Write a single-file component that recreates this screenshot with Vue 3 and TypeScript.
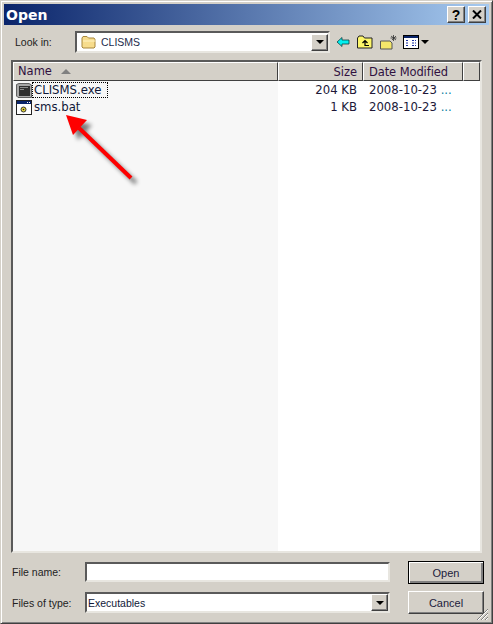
<script setup lang="ts">
interface FileRow {
  name: string
  size: string
  modified: string
  kind: 'exe' | 'bat'
  focused: boolean
}

const files: FileRow[] = [
  { name: 'CLISMS.exe', size: '204 KB', modified: '2008-10-23', kind: 'exe', focused: true },
  { name: 'sms.bat', size: '1 KB', modified: '2008-10-23', kind: 'bat', focused: false },
]
</script>

<template>
  <div class="window">
    <div class="titlebar">
      <span class="title">Open</span>
      <div class="caption-btns">
        <button class="caption-btn">?</button>
        <button class="caption-btn">
          <svg width="10" height="9" viewBox="0 0 10 9"><path d="M1 0.5 L9 8.5 M9 0.5 L1 8.5" stroke="#000" stroke-width="2" fill="none" /></svg>
        </button>
      </div>
    </div>

    <div class="toolbar">
      <span class="look-label">Look in:</span>
      <div class="combo look-combo">
        <svg class="folder" width="16" height="14" viewBox="0 0 16 14">
          <path d="M1 3 L2 1.5 H6 L7.5 3 H13 L14 4.5 V12 L13 13 H2 L1 12 Z" fill="#f7dc8c" stroke="#a8873c" />
          <path d="M2 6 H14.5" stroke="#fff3c4" fill="none" />
        </svg>
        <span class="combo-text">CLISMS</span>
        <span class="drop"><i class="caret"></i></span>
      </div>
      <div class="tools">
        <svg width="14" height="12" viewBox="0 0 14 12">
          <path d="M1 6 L6 1.5 V4 H13 V8 H6 V10.5 Z" fill="#00f0f0" stroke="#104040" stroke-width="0.8" />
        </svg>
        <svg width="16" height="14" viewBox="0 0 16 14">
          <path d="M0.5 3 L2 1 H6 L7.5 3 H15 V13 H0.5 Z" fill="#fdf66a" stroke="#222" />
          <path d="M8 11 V6 M5.5 8 L8 5.5 L10.5 8 M8 10.5 H12" stroke="#000" stroke-width="1.2" fill="none" />
        </svg>
        <svg width="17" height="15" viewBox="0 0 17 15">
          <path d="M0.5 6 H10 L12 8 V14 H0.5 Z" fill="#f4e66a" stroke="#555" />
          <path d="M12 5 L16 1 M11 1 L16 5 M13.5 0 V6 M10.5 3 H16.5" stroke="#333" stroke-width="0.8" fill="none" />
        </svg>
        <span class="view-tool">
          <svg width="16" height="14" viewBox="0 0 16 14">
            <rect x="0.5" y="0.5" width="15" height="13" fill="#fff" stroke="#000" />
            <rect x="1" y="1" width="14" height="2" fill="#0a246a" />
            <path d="M3 5.5 H6 M9 5.5 H13 M3 8 H6 M9 8 H13 M3 10.5 H6 M9 10.5 H13" stroke="#1a2fa0" stroke-dasharray="2 1" fill="none" />
          </svg>
          <i class="caret small"></i>
        </span>
      </div>
    </div>

    <div class="list">
      <div class="list-head">
        <div class="th th-name">Name <i class="sort"></i></div>
        <div class="th th-size">Size</div>
        <div class="th th-date">Date Modified</div>
        <div class="th th-rest"></div>
      </div>
      <div class="list-body">
        <div v-for="file in files" :key="file.name" class="row">
          <div class="cell-name">
            <svg v-if="file.kind === 'exe'" width="16" height="15" viewBox="0 0 16 15">
              <path d="M0.5 1.5 L3 0.5 H13 L15.5 2 V14.5 H2 L0.5 13 Z" fill="#a8a8a8" stroke="#606060" />
              <path d="M3 3 H14 V13 H3 Z" fill="#303030" />
              <path d="M4 4.5 H12 M4 6.5 H8" stroke="#8c8c8c" />
            </svg>
            <svg v-else width="16" height="15" viewBox="0 0 16 15">
              <rect x="0.5" y="0.5" width="15" height="14" fill="#fff" stroke="#222" />
              <rect x="1" y="1" width="14" height="3" fill="#0a246a" />
              <path d="M11 2.5 H14" stroke="#fff" stroke-dasharray="1 1" />
              <circle cx="7.5" cy="9.5" r="2.5" fill="#e8d838" stroke="#333" />
              <circle cx="7.5" cy="9.5" r="0.8" fill="#222" />
            </svg>
            <span class="fname" :class="{ focused: file.focused }">{{ file.name }}</span>
          </div>
          <div class="cell-size">{{ file.size }}</div>
          <div class="cell-date">{{ file.modified }} <span class="dots">...</span></div>
        </div>
      </div>

      <svg class="arrow" width="90" height="90" viewBox="0 0 90 90">
        <defs>
          <filter id="arrow-shadow" x="-20%" y="-20%" width="150%" height="150%">
            <feGaussianBlur stdDeviation="2" />
          </filter>
        </defs>
        <g transform="translate(5 5)" opacity="0.5" filter="url(#arrow-shadow)">
          <path d="M65 66 L13 16" stroke="#000" stroke-width="4" fill="none" />
          <path d="M0 3 L21 8 L7 23 Z" fill="#000" />
        </g>
        <path d="M65 66 L13 16" stroke="#fe0000" stroke-width="4" fill="none" />
        <path d="M0 3 L21 8 L7 23 Z" fill="#fe0000" />
      </svg>
    </div>

    <div class="bottom">
      <div class="fields">
        <div class="field">
          <label class="field-label">File name:</label>
          <input class="input" type="text" />
        </div>
        <div class="field">
          <label class="field-label">Files of type:</label>
          <div class="combo type-combo">
            <span class="combo-text">Executables</span>
            <span class="drop"><i class="caret"></i></span>
          </div>
        </div>
      </div>
      <div class="actions">
        <button class="btn default">Open</button>
        <button class="btn">Cancel</button>
      </div>
    </div>

    <svg class="grip" width="14" height="14" viewBox="0 0 14 14">
      <path d="M13 2 L2 13 M13 6 L6 13 M13 10 L10 13" stroke="#808080" fill="none" />
      <path d="M13 3 L3 13 M13 7 L7 13 M13 11 L11 13" stroke="#fff" fill="none" />
    </svg>
  </div>
</template>

<style>
html, body {
  margin: 0;
  background: #d4d0c8;
}
</style>

<style scoped>
.window {
  position: relative;
  box-sizing: border-box;
  width: 493px;
  height: 624px;
  padding: 4px;
  background: #d4d0c8;
  border: 1px solid;
  border-color: #d4d0c8 #404040 #404040 #d4d0c8;
  box-shadow: inset 1px 1px 0 #fff, inset -1px -1px 0 #808080;
  font-family: "DejaVu Sans", sans-serif;
  font-size: 11.5px;
  color: #000;
  display: flex;
  flex-direction: column;
}

.titlebar {
  height: 21px;
  margin: -1px -1px 0 -1px;
  padding: 0 3px 0 2px;
  background: linear-gradient(90deg, #0a246a, #a6caf0);
  display: flex;
  align-items: center;
  justify-content: space-between;
}

.title {
  color: #fff;
  font-weight: bold;
  font-size: 14px;
  font-family: "DejaVu Sans", sans-serif;
}

.caption-btns {
  display: flex;
  gap: 3px;
}

.caption-btn {
  width: 18px;
  height: 17px;
  padding: 0;
  background: #d4d0c8;
  border: 1px solid;
  border-color: #fff #404040 #404040 #fff;
  box-shadow: inset -1px -1px 0 #808080;
  font: bold 14px "Liberation Sans", sans-serif;
  display: flex;
  align-items: center;
  justify-content: center;
}

.toolbar {
  display: flex;
  align-items: center;
  height: 22px;
  margin-top: 6px;
  padding-left: 10px;
}

.look-label {
  width: 60px;
  color: #222;
  font-family: "Liberation Sans", sans-serif;
  font-size: 10.5px;
}

.combo {
  box-sizing: border-box;
  display: flex;
  align-items: center;
  background: #fff;
  border: 2px solid;
  border-color: #5a5a5a #e8e6e0 #e8e6e0 #5a5a5a;
  position: relative;
}

.look-combo {
  width: 255px;
  height: 22px;
  padding-left: 4px;
}

.folder {
  margin-right: 4px;
}

.combo-text {
  flex: 1;
  color: #1c2c4c;
  font-family: "Liberation Sans", sans-serif;
  font-size: 10.5px;
}

.drop {
  box-sizing: border-box;
  width: 17px;
  height: 17px;
  background: #d4d0c8;
  border: 1px solid;
  border-color: #fff #404040 #404040 #fff;
  box-shadow: inset -1px -1px 0 #808080;
  display: flex;
  align-items: center;
  justify-content: center;
  margin-right: 0;
}

.caret {
  width: 0;
  height: 0;
  border-left: 4px solid transparent;
  border-right: 4px solid transparent;
  border-top: 4px solid #000;
  display: block;
}

.caret.small {
  margin-left: 2px;
}

.tools {
  display: flex;
  align-items: center;
  gap: 7px;
  margin-left: 6px;
}

.view-tool {
  display: flex;
  align-items: center;
  margin-left: -1px;
}

.list {
  position: relative;
  box-sizing: border-box;
  height: 493px;
  margin: 7px 6px 0 6px;
  border: 2px solid;
  border-color: #5a5a5a #e8e6e0 #e8e6e0 #5a5a5a;
  display: flex;
  flex-direction: column;
  background: #fff;
}

.list-head {
  display: flex;
  height: 19px;
  flex: none;
}

.th {
  box-sizing: border-box;
  height: 19px;
  line-height: 19px;
  background: #d4d0c8;
  border: 1px solid;
  border-color: #fff #404040 #404040 #fff;
  color: #301040;
  white-space: nowrap;
}

.th-name {
  width: 265px;
  padding-left: 4px;
  display: flex;
  align-items: center;
  gap: 9px;
}

.sort {
  width: 0;
  height: 0;
  border-left: 5px solid transparent;
  border-right: 5px solid transparent;
  border-bottom: 5px solid #808080;
}

.th-size {
  width: 85px;
  text-align: right;
  padding-right: 5px;
}

.th-date {
  width: 100px;
  padding-left: 5px;
  letter-spacing: -0.1px;
}

.th-rest {
  flex: 1;
}

.list-body {
  flex: 1;
  background: linear-gradient(90deg, #f7f7f7 265px, #fff 265px);
}

.row {
  display: flex;
  align-items: center;
  height: 17px;
  font-size: 11.7px;
}

.cell-name {
  width: 265px;
  padding-left: 3px;
  box-sizing: border-box;
  display: flex;
  align-items: center;
}

.cell-name svg {
  margin-top: 2px;
}

.fname {
  padding: 0 5px 0 1px;
  border: 1px dotted transparent;
  color: #101838;
  line-height: 14px;
}

.fname.focused {
  border-color: #000;
}

.cell-size {
  width: 79px;
  text-align: right;
  color: #201838;
}

.cell-date {
  margin-left: 12px;
  color: #201838;
  white-space: nowrap;
}

.dots {
  color: #0a80a0;
}

.arrow {
  position: absolute;
  left: 53px;
  top: 50px;
}

.bottom {
  display: flex;
  margin: 8px 0 0 7px;
  height: 54px;
}

.fields {
  display: flex;
  flex-direction: column;
  gap: 10px;
}

.field {
  display: flex;
  align-items: center;
  height: 21px;
}

.field-label {
  width: 73px;
  font-family: "Liberation Sans", sans-serif;
  font-size: 10.5px;
  color: #222;
}

.input {
  box-sizing: border-box;
  width: 305px;
  height: 20px;
  margin: 0;
  background: #fff;
  border: 2px solid;
  border-color: #5a5a5a #e8e6e0 #e8e6e0 #5a5a5a;
  outline: none;
}

.type-combo {
  width: 305px;
  height: 21px;
  padding-left: 1px;
}

.type-combo .combo-text {
  color: #101838;
}

.actions {
  display: flex;
  flex-direction: column;
  gap: 7px;
  margin-left: 18px;
}

.btn {
  box-sizing: border-box;
  width: 76px;
  height: 23px;
  padding: 0;
  background: #d4d0c8;
  border: 1px solid;
  border-color: #fff #404040 #404040 #fff;
  box-shadow: inset -1px -1px 0 #808080;
  font-family: "Liberation Sans", sans-serif;
  font-size: 11px;
  color: #1c1c3c;
}

.btn.default {
  border-color: #000;
  box-shadow: inset 1px 1px 0 #fff, inset -2px -2px 0 #808080;
}

.grip {
  position: absolute;
  right: 3px;
  bottom: 2px;
}
</style>
